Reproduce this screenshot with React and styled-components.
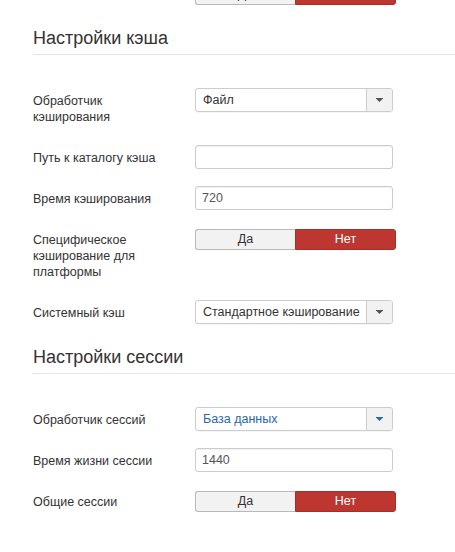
import React from "react";
import styled, { createGlobalStyle } from "styled-components";

const Global = createGlobalStyle`
  html, body { margin: 0; padding: 0; background: #fff; }
  body { font-family: "Liberation Sans", Arial, sans-serif; color: #333; overflow: hidden; }
`;

const Page = styled.div`
  padding-left: 33px;
  margin-top: -18px;
`;

const Legend = styled.h3`
  margin: 0 0 33px;
  font-size: 18px;
  font-weight: normal;
  line-height: 32px;
  color: #333;
  border-bottom: 1px solid #e5e5e5;
`;

const Group = styled.div`
  display: flex;
  align-items: flex-start;
  margin-bottom: 17px;
`;

const Label = styled.div`
  width: 140px;
  margin-right: 22px;
  flex-shrink: 0;
  padding-top: ${(p) => p.$pad}px;
  padding-bottom: 3px;
  font-size: 12.5px;
  line-height: 16px;
  color: #333;
`;

const Input = styled.div`
  box-sizing: border-box;
  width: 198px;
  height: 24px;
  border: 1px solid #ccc;
  border-radius: 3px;
  box-shadow: inset 0 1px 1px rgba(0, 0, 0, 0.06);
  padding: 0 6px;
  font-size: 12.5px;
  line-height: 22px;
  color: #555;
  background: #fff;
`;

const Select = styled.div`
  box-sizing: border-box;
  width: 198px;
  height: 24px;
  display: flex;
  border: 1px solid #ccc;
  border-radius: 3px;
  overflow: hidden;
  background: #fff;
  box-shadow: 0 1px 1px rgba(0, 0, 0, 0.04);
`;

const SelectValue = styled.div`
  flex: 1;
  padding-left: 7px;
  font-size: 12.5px;
  line-height: 22px;
  color: ${(p) => (p.$accent ? "#2a66ad" : "#333")};
  white-space: nowrap;
`;

const SelectButton = styled.div`
  width: 25px;
  border-left: 1px solid #ccc;
  background: #f2f2f2;
  display: flex;
  align-items: center;
  justify-content: center;
  color: ${(p) => (p.$accent ? "#2a66ad" : "#555")};
`;

const Toggle = styled.div`
  display: flex;
  width: 201px;
  height: 21px;
  margin-top: 2px;
`;

const ToggleOption = styled.div`
  box-sizing: border-box;
  flex: ${(p) => (p.$on ? "0 0 101px" : "0 0 100px")};
  text-align: center;
  font-size: 12.5px;
  line-height: 19px;
  border: 1px solid ${(p) => (p.$on ? "#a52e28" : "#b8b8b8")};
  background: ${(p) => (p.$on ? "#bd362f" : "#f2f2f2")};
  color: ${(p) => (p.$on ? "#fff" : "#333")};
  border-radius: ${(p) => (p.$on ? "0 3px 3px 0" : "3px 0 0 3px")};
  ${(p) => (p.$on ? "" : "border-right: none;")}
`;

const Arrow = () => (
  <svg width="7" height="5" viewBox="0 0 7 5">
    <rect x="0" y="0" width="7" height="1" fill="currentColor" />
    <path d="M0.5 1 L6.5 1 L3.5 4 Z" fill="currentColor" />
  </svg>
);

const YesNo = () => (
  <Toggle>
    <ToggleOption>Да</ToggleOption>
    <ToggleOption $on>Нет</ToggleOption>
  </Toggle>
);

const Dropdown = ({ value, accent }) => (
  <Select>
    <SelectValue $accent={accent}>{value}</SelectValue>
    <SelectButton $accent={accent}>
      <Arrow />
    </SelectButton>
  </Select>
);

export default function App() {
  return (
    <>
      <Global />
      <Page>
        <Group>
          <Label $pad={5} />
          <YesNo />
        </Group>

        <Legend>Настройки кэша</Legend>
        <Group>
          <Label $pad={5}>Обработчик кэширования</Label>
          <Dropdown value="Файл" />
        </Group>
        <Group>
          <Label $pad={4.5}>Путь к каталогу кэша</Label>
          <Input />
        </Group>
        <Group>
          <Label $pad={4.5}>Время кэширования</Label>
          <Input>720</Input>
        </Group>
        <Group>
          <Label $pad={5}>Специфическое кэширование для платформы</Label>
          <YesNo />
        </Group>
        <Group>
          <Label $pad={4.5}>Системный кэш</Label>
          <Dropdown value="Стандартное кэширование" />
        </Group>

        <Legend>Настройки сессии</Legend>
        <Group>
          <Label $pad={4.5}>Обработчик сессий</Label>
          <Dropdown value="База данных" accent />
        </Group>
        <Group>
          <Label $pad={4.5}>Время жизни сессии</Label>
          <Input>1440</Input>
        </Group>
        <Group>
          <Label $pad={5}>Общие сессии</Label>
          <YesNo />
        </Group>
      </Page>
    </>
  );
}
